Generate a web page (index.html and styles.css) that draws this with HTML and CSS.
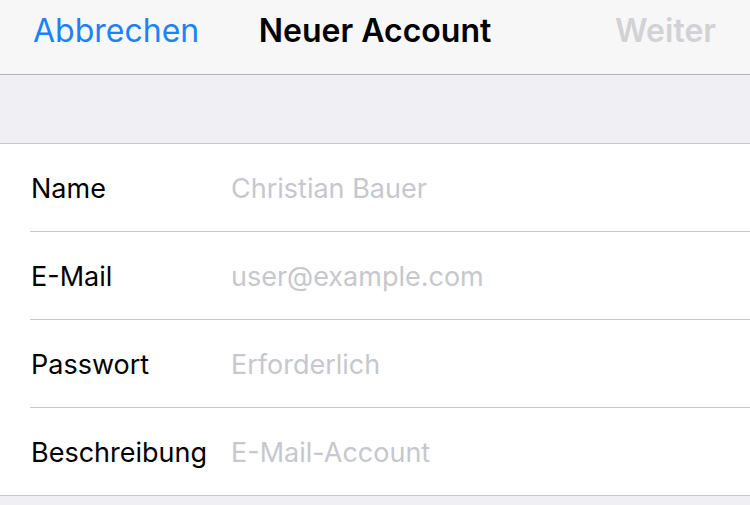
FILE: index.html
```html
<!DOCTYPE html>
<html lang="de">
<head>
<meta charset="utf-8">
<title>Neuer Account</title>
<link rel="stylesheet" href="styles.css">
</head>
<body>
<div class="screen">
  <header class="navbar">
    <div class="nav-left"><span class="nav-btn cancel">Abbrechen</span></div>
    <div class="nav-title">Neuer Account</div>
    <div class="nav-right"><span class="nav-btn next">Weiter</span></div>
  </header>
  <div class="spacer"></div>
  <div class="form">
    <div class="row"><span class="label">Name</span><span class="value">Christian Bauer</span></div>
    <div class="row"><span class="label">E-Mail</span><span class="value">user@example.com</span></div>
    <div class="row"><span class="label">Passwort</span><span class="value">Erforderlich</span></div>
    <div class="row last"><span class="label">Beschreibung</span><span class="value">E-Mail-Account</span></div>
  </div>
  <div class="footer"></div>
</div>
</body>
</html>
```
FILE: styles.css
```css
* { box-sizing: border-box; }
html, body {
  margin: 0;
  padding: 0;
  width: 750px;
  height: 505px;
  overflow: hidden;
  background: #efeff4;
  font-family: Inter, "Liberation Sans", Arial, sans-serif;
}
.screen {
  display: flex;
  flex-direction: column;
  width: 750px;
  height: 505px;
}
.navbar {
  height: 75px;
  background: #f7f7f8;
  border-bottom: 1px solid #b2b2b2;
  display: grid;
  grid-template-columns: 1fr auto 1fr;
  align-items: start;
  padding-top: 11px;
  line-height: 40px;
}
.nav-left { padding-left: 33px; }
.nav-right { display: flex; justify-content: flex-end; padding-right: 34px; }
.nav-btn { font-size: 32px; }
.cancel { color: #1a82fb; }
.next { color: #d2d2d5; font-weight: 600; }
.nav-title {
  font-size: 32px;
  font-weight: 600;
  color: #000;
}
.spacer {
  height: 69px;
  background: #efeff4;
  border-bottom: 1px solid #c8c7cc;
}
.form {
  background: #fff;
  padding-left: 30px;
  border-bottom: 1px solid #c8c7cc;
}
.row {
  height: 88px;
  display: flex;
  align-items: center;
  padding-left: 1px;
  padding-top: 2px;
  border-bottom: 1px solid #c8c7cc;
  font-size: 27px;
}
.row.last { border-bottom: none; height: 87px; }
.label {
  width: 200px;
  color: #000;
}
.value { color: #c7c7cd; }
.footer { flex: 1; background: #efeff4; }
```
